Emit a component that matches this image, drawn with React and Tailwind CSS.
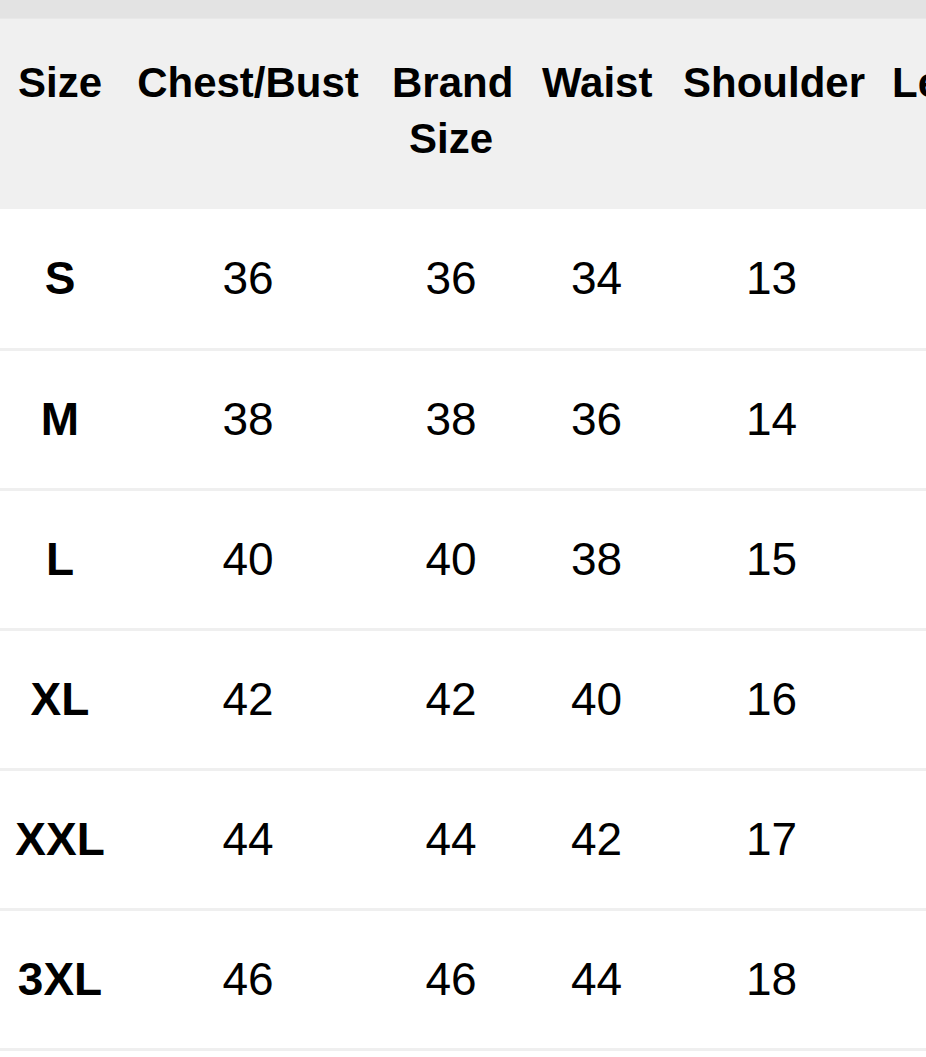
import React from 'react';

const headers = ['Size', 'Chest/Bust', 'Brand Size', 'Waist', 'Shoulder', 'Length'];

const rows = [
  { size: 'S', chest: 36, brand: 36, waist: 34, shoulder: 13, length: 27 },
  { size: 'M', chest: 38, brand: 38, waist: 36, shoulder: 14, length: 28 },
  { size: 'L', chest: 40, brand: 40, waist: 38, shoulder: 15, length: 29 },
  { size: 'XL', chest: 42, brand: 42, waist: 40, shoulder: 16, length: 30 },
  { size: 'XXL', chest: 44, brand: 44, waist: 42, shoulder: 17, length: 31 },
  { size: '3XL', chest: 46, brand: 46, waist: 44, shoulder: 18, length: 32 },
];

export default function App() {
  return (
    <div
      className="w-[926px] h-[1057px] overflow-hidden bg-white text-black"
      style={{ fontFamily: '"Liberation Sans", Arial, sans-serif' }}
    >
      {/* top strip */}
      <div className="h-[19px] bg-[#e3e3e3] border-b border-[#e8e8e8]" />

      <table className="table-fixed w-[1046px]">
        <colgroup>
          <col className="w-[120px]" />
          <col className="w-[256px]" />
          <col className="w-[150px]" />
          <col className="w-[141px]" />
          <col className="w-[209px]" />
          <col className="w-[170px]" />
        </colgroup>
        <thead>
          <tr className="bg-[#f0f0f0]">
            {headers.map((h) => (
              <th
                key={h}
                className="h-[190px] align-top pt-[36px] px-4 text-center text-[42px] leading-[56px] font-bold"
              >
                {h}
              </th>
            ))}
          </tr>
        </thead>
        <tbody>
          {rows.map((r) => (
            <tr key={r.size}>
              <td className="h-[140px] border-b-[3px] border-[#efefef] text-center align-middle text-[46px] font-bold">
                {r.size}
              </td>
              <td className="border-b-[3px] border-[#efefef] text-center align-middle text-[46px]">{r.chest}</td>
              <td className="border-b-[3px] border-[#efefef] text-center align-middle text-[46px]">{r.brand}</td>
              <td className="border-b-[3px] border-[#efefef] text-center align-middle text-[46px]">{r.waist}</td>
              <td className="border-b-[3px] border-[#efefef] text-center align-middle text-[46px]">{r.shoulder}</td>
              <td className="border-b-[3px] border-[#efefef] text-center align-middle text-[46px]">{r.length}</td>
            </tr>
          ))}
        </tbody>
      </table>
    </div>
  );
}
